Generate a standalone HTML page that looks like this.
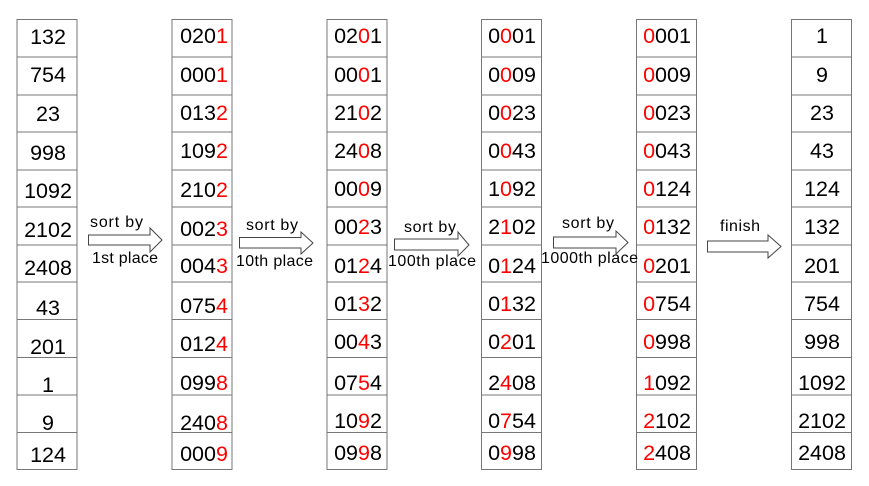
<!DOCTYPE html>
<html><head><meta charset="utf-8"><style>html,body{margin:0;padding:0;background:#fff;}svg{display:block}</style></head>
<body>
<svg width="869" height="486" viewBox="0 0 869 486" xmlns="http://www.w3.org/2000/svg" font-family="Liberation Sans, sans-serif">
<rect width="869" height="486" fill="#fff"/>
<g fill="#fff" stroke="#777" stroke-width="1">
<rect x="17" y="19.5" width="60" height="450"/>
<rect x="172" y="19.5" width="60" height="450"/>
<rect x="327" y="19.5" width="60" height="450"/>
<rect x="481.5" y="19.5" width="60" height="450"/>
<rect x="636.5" y="19.5" width="60" height="450"/>
<rect x="791.5" y="19.5" width="60" height="450"/>
</g>
<g stroke="#777" stroke-width="1">
<path d="M17 57H77M17 95H77M17 132H77M17 170H77M17 207H77M17 245H77M17 282H77M17 319.5H77M17 357.5H77M17 395H77M17 432.5H77"/>
<path d="M172 57H232M172 95H232M172 132H232M172 170H232M172 207H232M172 245H232M172 282H232M172 319.5H232M172 357.5H232M172 395H232M172 432.5H232"/>
<path d="M327 57H387M327 95H387M327 132H387M327 170H387M327 207H387M327 245H387M327 282H387M327 319.5H387M327 357.5H387M327 395H387M327 432.5H387"/>
<path d="M481.5 57H541.5M481.5 95H541.5M481.5 132H541.5M481.5 170H541.5M481.5 207H541.5M481.5 245H541.5M481.5 282H541.5M481.5 319.5H541.5M481.5 357.5H541.5M481.5 395H541.5M481.5 432.5H541.5"/>
<path d="M636.5 57H696.5M636.5 95H696.5M636.5 132H696.5M636.5 170H696.5M636.5 207H696.5M636.5 245H696.5M636.5 282H696.5M636.5 319.5H696.5M636.5 357.5H696.5M636.5 395H696.5M636.5 432.5H696.5"/>
<path d="M791.5 57H851.5M791.5 95H851.5M791.5 132H851.5M791.5 170H851.5M791.5 207H851.5M791.5 245H851.5M791.5 282H851.5M791.5 319.5H851.5M791.5 357.5H851.5M791.5 395H851.5M791.5 432.5H851.5"/>
</g>
<g font-size="21.5" fill="#000" text-anchor="middle">
<text x="48" y="44">132</text><text x="48" y="82">754</text><text x="48" y="121">23</text><text x="48" y="160">998</text><text x="48" y="198">1092</text><text x="48" y="237">2102</text><text x="48" y="275">2408</text><text x="48" y="315">43</text><text x="48" y="354">201</text><text x="48" y="392">1</text><text x="48" y="430">9</text><text x="48" y="462">124</text>
<text x="204" y="43">020<tspan fill="#f00">1</tspan></text><text x="204" y="82">000<tspan fill="#f00">1</tspan></text><text x="204" y="120">013<tspan fill="#f00">2</tspan></text><text x="204" y="158">109<tspan fill="#f00">2</tspan></text><text x="204" y="197">210<tspan fill="#f00">2</tspan></text><text x="204" y="236">002<tspan fill="#f00">3</tspan></text><text x="204" y="273">004<tspan fill="#f00">3</tspan></text><text x="204" y="313">075<tspan fill="#f00">4</tspan></text><text x="204" y="351">012<tspan fill="#f00">4</tspan></text><text x="204" y="390">099<tspan fill="#f00">8</tspan></text><text x="204" y="430">240<tspan fill="#f00">8</tspan></text><text x="204" y="461">000<tspan fill="#f00">9</tspan></text>
<text x="358" y="43">02<tspan fill="#f00">0</tspan>1</text><text x="358" y="82">00<tspan fill="#f00">0</tspan>1</text><text x="358" y="120">21<tspan fill="#f00">0</tspan>2</text><text x="358" y="158">24<tspan fill="#f00">0</tspan>8</text><text x="358" y="196">00<tspan fill="#f00">0</tspan>9</text><text x="358" y="234">00<tspan fill="#f00">2</tspan>3</text><text x="358" y="273">01<tspan fill="#f00">2</tspan>4</text><text x="358" y="311">01<tspan fill="#f00">3</tspan>2</text><text x="358" y="349">00<tspan fill="#f00">4</tspan>3</text><text x="358" y="390">07<tspan fill="#f00">5</tspan>4</text><text x="358" y="428">10<tspan fill="#f00">9</tspan>2</text><text x="358" y="460">09<tspan fill="#f00">9</tspan>8</text>
<text x="512" y="43">0<tspan fill="#f00">0</tspan>01</text><text x="512" y="82">0<tspan fill="#f00">0</tspan>09</text><text x="512" y="120">0<tspan fill="#f00">0</tspan>23</text><text x="512" y="158">0<tspan fill="#f00">0</tspan>43</text><text x="512" y="196">1<tspan fill="#f00">0</tspan>92</text><text x="512" y="234">2<tspan fill="#f00">1</tspan>02</text><text x="512" y="273">0<tspan fill="#f00">1</tspan>24</text><text x="512" y="311">0<tspan fill="#f00">1</tspan>32</text><text x="512" y="349">0<tspan fill="#f00">2</tspan>01</text><text x="512" y="390">2<tspan fill="#f00">4</tspan>08</text><text x="512" y="428">0<tspan fill="#f00">7</tspan>54</text><text x="512" y="460">0<tspan fill="#f00">9</tspan>98</text>
<text x="667" y="43"><tspan fill="#f00">0</tspan>001</text><text x="667" y="82"><tspan fill="#f00">0</tspan>009</text><text x="667" y="120"><tspan fill="#f00">0</tspan>023</text><text x="667" y="158"><tspan fill="#f00">0</tspan>043</text><text x="667" y="196"><tspan fill="#f00">0</tspan>124</text><text x="667" y="234"><tspan fill="#f00">0</tspan>132</text><text x="667" y="273"><tspan fill="#f00">0</tspan>201</text><text x="667" y="311"><tspan fill="#f00">0</tspan>754</text><text x="667" y="349"><tspan fill="#f00">0</tspan>998</text><text x="667" y="390"><tspan fill="#f00">1</tspan>092</text><text x="667" y="428"><tspan fill="#f00">2</tspan>102</text><text x="667" y="460"><tspan fill="#f00">2</tspan>408</text>
<text x="822" y="43">1</text><text x="822" y="82">9</text><text x="822" y="120">23</text><text x="822" y="158">43</text><text x="822" y="196">124</text><text x="822" y="234">132</text><text x="822" y="273">201</text><text x="822" y="311">754</text><text x="822" y="349">998</text><text x="822" y="390">1092</text><text x="822" y="428">2102</text><text x="822" y="460">2408</text>
</g>
<g fill="#fff" stroke="#444" stroke-width="1">
<path d="M88.5 235H150V228L162 240L150 252V245H88.5Z"/>
<path d="M239.5 237.5H301V232L313 243L301 254V248H239.5Z"/>
<path d="M394.5 239H458V232L469 245L458 256V250H394.5Z"/>
<path d="M553.5 237H616V231L628 242.5L616 254V248H553.5Z"/>
<path d="M707.5 241H768V235L781 246.5L768 258V252H707.5Z"/>
</g>
<g font-size="16" fill="#000">
<text x="90" y="227" textLength="53">sort by</text>
<text x="92" y="263" textLength="66">1st place</text>
<text x="246" y="230" textLength="52">sort by</text>
<text x="236" y="266" textLength="77">10th place</text>
<text x="404" y="232" textLength="52">sort by</text>
<text x="388" y="266" textLength="88">100th place</text>
<text x="562" y="228" textLength="52">sort by</text>
<text x="541" y="263" textLength="97">1000th place</text>
<text x="720" y="231" textLength="40">finish</text>
</g>
</svg>
</body></html>
